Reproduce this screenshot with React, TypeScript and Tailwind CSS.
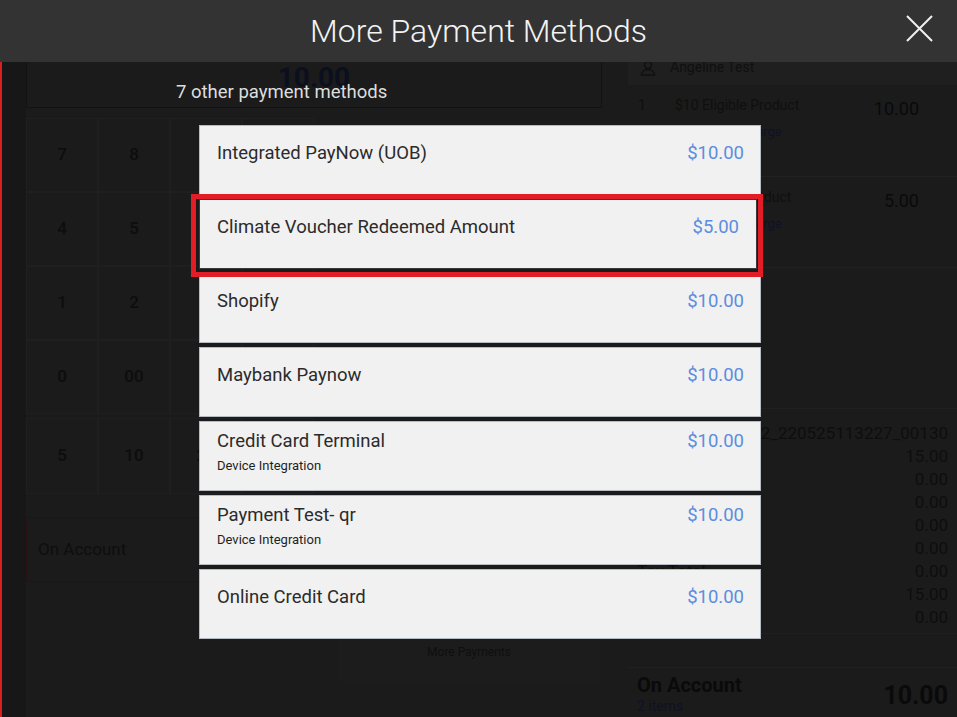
import React from "react";

type Method = {
    name: string;
    amount: string;
    note?: string;
};

const methods: Method[] = [
    { name: "Integrated PayNow (UOB)", amount: "$10.00" },
    { name: "Climate Voucher Redeemed Amount", amount: "$5.00" },
    { name: "Shopify", amount: "$10.00" },
    { name: "Maybank Paynow", amount: "$10.00" },
    { name: "Credit Card Terminal", amount: "$10.00", note: "Device Integration" },
    { name: "Payment Test- qr", amount: "$10.00", note: "Device Integration" },
    { name: "Online Credit Card", amount: "$10.00" },
];

const keypad = [
    ["7", "8", "9", ""],
    ["4", "5", "6", ""],
    ["1", "2", "3", ""],
    ["0", "00", ".", ""],
    ["5", "10", "20", "50"],
];

const summary = [
    ["Subtotal", "15.00"],
    ["Discount", "0.00"],
    ["Service Charge", "0.00"],
    ["Promotions", "0.00"],
    ["Rounding", "0.00"],
    ["Tax Total", "0.00"],
    ["Total", "15.00"],
    ["Change", "0.00"],
];

function PosBackground() {
    return (
        <div className="flex h-full border-l-2 border-[#d9201f]">
            <div className="w-[24px] bg-[#171717]" />

            {/* left: amount + keypad */}
            <div className="w-[576px] flex flex-col">
                <div className="mt-[40px] h-[68px] border border-[#121212] flex items-start justify-center">
                    <span className="mt-[22px] text-[28px] leading-[30px] font-bold text-[#0c0f1d]">10.00</span>
                </div>
                <div className="mt-[10px] flex flex-col">
                    {keypad.map((row, i) => (
                        <div key={i} className={`flex ${i === 4 ? "h-[80px] pt-[4px]" : "h-[74px]"}`}>
                            {row.map((k, j) => (
                                <div key={j} className="w-[72px] border border-[#1f1f1f] flex items-center justify-center text-[17px] font-medium text-[#0d0d0d]">
                                    {k}
                                </div>
                            ))}
                        </div>
                    ))}
                </div>
                <div className="mt-[23px] flex gap-[14px]">
                    <div className="w-[260px] h-[65px] rounded-[3px] border border-[#2a1010] flex items-center pl-[11px] text-[17px] text-[#0e0e0e]">
                        On Account
                    </div>
                </div>
                <div className="mt-[18px] ml-[312px] w-[262px] h-[82px] bg-[#1c1c1c] flex items-center justify-center pt-[22px] text-[12px] text-[#0f0f0f]">
                    More Payments
                </div>
            </div>

            <div className="w-[26px]" />

            {/* right: order panel */}
            <div className="flex-1 flex flex-col bg-[#1b1b1b]">
                <div className="mt-[50px] h-[36px] bg-[#1f1f1f] flex items-center px-[12px] gap-[14px] text-[14px] text-[#101010]">
                    <svg width="16" height="16" viewBox="0 0 16 16" fill="none" stroke="#101010" strokeWidth="1.4">
                        <circle cx="8" cy="5" r="3.5" />
                        <path d="M1.5 15c0-3.5 3-5.5 6.5-5.5s6.5 2 6.5 5.5z" />
                    </svg>
                    Angeline Test
                </div>
                <div className="h-[94px] border-b border-[#212121] flex px-[10px] pt-[10px]">
                    <span className="w-[37px] text-[14px] text-[#0f0f0f]">1</span>
                    <div className="flex-1 flex flex-col">
                        <span className="text-[14px] leading-[20px] text-[#0f0f0f]">$10 Eligible Product</span>
                        <span className="mt-[7px] text-[13px] text-[#0e1226]">No Service Charge</span>
                    </div>
                    <span className="mr-[28px] text-[18px] text-[#0a0a0a]">10.00</span>
                </div>
                <div className="h-[93px] border-b border-[#212121] flex px-[10px] pt-[10px]">
                    <span className="w-[37px] text-[14px] text-[#0f0f0f]">1</span>
                    <div className="flex-1 flex flex-col">
                        <span className="text-[14px] leading-[20px] text-[#0f0f0f]">$5 Eligible Product</span>
                        <span className="mt-[7px] text-[13px] text-[#0e1226]">No Service Charge</span>
                    </div>
                    <span className="mr-[28px] text-[18px] text-[#0a0a0a]">5.00</span>
                </div>
                <div className="h-[145px] border-b border-[#202020]" />
                <div className="flex flex-col px-[9px] pt-[13px] text-[17px] leading-[23px] text-[#0e0e0e]">
                    <div className="text-right">POS2_220525113227_00130</div>
                    {summary.map(([label, value]) => (
                        <div key={label} className="flex justify-between">
                            <span>{label}</span>
                            <span>{value}</span>
                        </div>
                    ))}
                </div>
                <div className="mt-[4px] h-[36px] border-y border-[#202020]" />
                <div className="flex justify-between items-center px-[9px] pt-[6px]">
                    <div className="flex flex-col">
                        <span className="text-[20px] leading-[22px] font-bold text-[#0a0a0a]">On Account</span>
                        <span className="text-[14px] text-[#0e1226]">2 items</span>
                    </div>
                    <span className="text-[25px] font-bold text-[#0a0a0a]">10.00</span>
                </div>
            </div>
        </div>
    );
}

function MethodCard({ m, selected }: { m: Method; selected?: boolean }) {
    return (
        <div
            className={`h-[70px] bg-[#f1f1f1] border flex justify-between ${selected ? "w-[558px] border-[#3a3a3a] pl-[17px] pr-[17px]" : "w-[562px] border-[#b7bbc3] pl-[17px] pr-[16px]"
                } ${m.note ? "pt-[8px]" : "pt-[16px]"}`}
        >
            <div className="flex flex-col">
                <span className="text-[18.5px] leading-[22px] text-[#2b2b2b]">{m.name}</span>
                {m.note && <span className="mt-[6px] text-[13px] leading-[16px] text-[#1f1f1f]">{m.note}</span>}
            </div>
            <span className="text-[18.5px] leading-[22px] text-[#5b8de0]">{m.amount}</span>
        </div>
    );
}

export default function App() {
    return (
        <div className="relative w-[957px] h-[717px] overflow-hidden bg-[#1b1b1b] font-['Roboto',sans-serif]">
            <PosBackground />

            {/* More Payment Methods overlay */}
            <div className="absolute inset-0 flex flex-col">
                <div className="relative h-[62px] bg-[#333333] flex items-center justify-center">
                    <h1 className="text-[32px] font-light text-[#f3f3f3]">More Payment Methods</h1>
                    <button className="absolute right-[24px] top-[15px] w-[27px] h-[27px]">
                        <svg width="27" height="27" viewBox="0 0 27 27" stroke="#f0f0f0" strokeWidth="2" fill="none">
                            <path d="M1 1L26 26M26 1L1 26" />
                        </svg>
                    </button>
                </div>

                <p className="mt-[20px] pl-[176px] text-[18.5px] leading-[20px] text-[#dedede]">7 other payment methods</p>

                <div className="mt-[23px] ml-[199px] flex flex-col gap-[4px]">
                    {methods.map((m, i) =>
                        i === 1 ? (
                            <div key={m.name} className="relative">
                                <MethodCard m={m} selected />
                                <div className="absolute left-[-8px] top-[-5px] w-[572px] h-[83px] border-[5px] border-[#e21d25]" />
                            </div>
                        ) : (
                            <MethodCard key={m.name} m={m} />
                        )
                    )}
                </div>
            </div>
        </div>
    );
}
